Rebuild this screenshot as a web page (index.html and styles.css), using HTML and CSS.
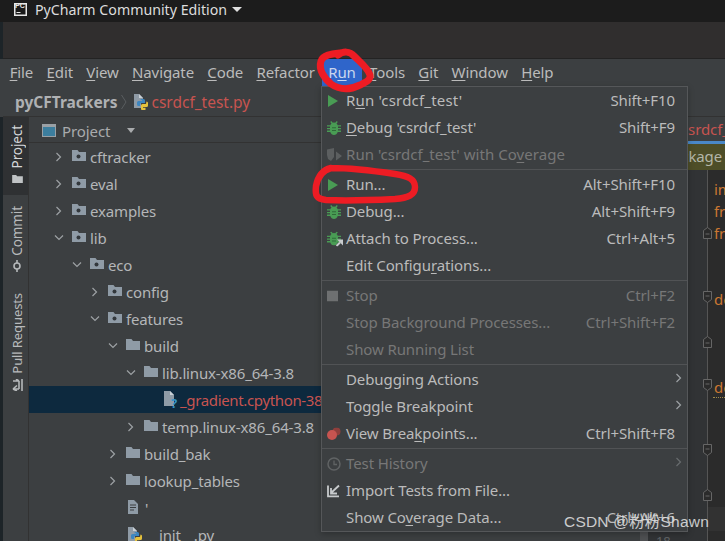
FILE: index.html
```html
<!DOCTYPE html>
<html lang="en">
<head>
<meta charset="utf-8">
<title>PyCharm Community Edition</title>
<link rel="stylesheet" href="styles.css">
</head>
<body>
<svg class="defs" width="0" height="0" aria-hidden="true">
  <symbol id="i-folder" viewBox="0 0 14 11"><path d="M0 0h5.500l1.500 2H14v9H0z" fill="#8f9ba6"/></symbol>
  <symbol id="i-module" viewBox="0 0 14 11"><path d="M0 0h5.500l1.500 2H14v9H0z" fill="#8f9ba6"/><circle cx="6.500" cy="6.500" r="2" fill="#33383c"/></symbol>
  <symbol id="i-right" viewBox="0 0 8 10"><path d="M1.500 1l4 4-4 4" fill="none" stroke="#9da1a4" stroke-width="1.200"/></symbol>
  <symbol id="i-down" viewBox="0 0 10 8"><path d="M1 1.500l4 4 4-4" fill="none" stroke="#9da1a4" stroke-width="1.200"/></symbol>
  <symbol id="i-python" viewBox="0 0 14 16"><path d="M0 0h5l4 4v3H7v7H0z" fill="#8f9ba6"/><path d="M9 4H5V0z" fill="#c9d0d6"/><path d="M7 5h2.500A1.500 1.500 0 0 1 11 6.500V9H7.500A1.500 1.500 0 0 0 6 10.500V12H4.500A1.500 1.500 0 0 1 3 10.500v-2A1.500 1.500 0 0 1 4.500 7H8V6.300H6z" fill="#3d86c0"/><path d="M12.500 7.500A1.500 1.500 0 0 1 14 9v2.500A1.500 1.500 0 0 1 12.500 13H9v.7h2.500V15.500A.5.500 0 0 1 11 16H8a1 1 0 0 1-1-1v-3.500A1.500 1.500 0 0 1 8.500 10H12z" fill="#e6c23c"/></symbol>
  <symbol id="i-play" viewBox="0 0 12 12"><path d="M1 0l10 6-10 6z" fill="#499c54"/></symbol>
  <symbol id="i-bug" viewBox="0 0 14 14"><path d="M4.200 0l1.600 1.800a4 4 0 0 1 2.400 0L9.800 0l1 .9L9.500 2.500c.6.500 1 1 1.200 1.700H14v1.300h-3V7h3v1.300h-3v1.300h3v1.300h-3.300c-.6 1.700-2 3-3.700 3s-3.100-1.300-3.700-3H0V9.600h3V8.300H0V7h3V5.500H0V4.200h3.300c.2-.7.600-1.200 1.200-1.700L3.200.9z" fill="#499c54"/><path d="M5 6.200h4v1H5zM5 8.900h4v1H5z" fill="#2f6b38"/></symbol>
</svg>

<div class="app">
  <header class="titlebar">
    <svg class="pc" viewBox="0 0 13 13" width="13" height="13"><rect width="13" height="13" fill="#e8e8e8"/><rect x="1.500" y="1.500" width="10" height="10" fill="#1a1a1a"/><rect x="2.500" y="9" width="4" height="1" fill="#e8e8e8"/></svg>
    <span class="pc-letters">PC</span>
    <span class="title">PyCharm Community Edition</span>
    <span class="caret"></span>
  </header>
  <div class="band"></div>

  <nav class="menubar">
    <span class="mi"><u>F</u>ile</span>
    <span class="mi"><u>E</u>dit</span>
    <span class="mi"><u>V</u>iew</span>
    <span class="mi"><u>N</u>avigate</span>
    <span class="mi"><u>C</u>ode</span>
    <span class="mi"><u>R</u>efactor</span>
    <span class="mi active">R<u>u</u>n</span>
    <span class="mi"><u>T</u>ools</span>
    <span class="mi"><u>G</u>it</span>
    <span class="mi"><u>W</u>indow</span>
    <span class="mi"><u>H</u>elp</span>
  </nav>

  <div class="crumbs">
    <b>pyCFTrackers</b>
    <svg class="crumb-sep" viewBox="0 0 6 16" width="6" height="16"><path d="M.5 1l4.500 7-4.500 7" fill="none" stroke="#5a5e60"/></svg>
    <svg class="ico-py" width="14" height="16"><use href="#i-python"/></svg>
    <span class="red">csrdcf_test.py</span>
  </div>

  <main class="workspace">
    <aside class="strip">
      <div class="tab on">
        <span class="vert">Project</span>
        <svg class="tab-ico" viewBox="0 0 12 9" width="11" height="8"><path d="M0 0h4.500l1 1.500H12V9H0z" fill="#c0c3c5"/></svg>
      </div>
      <div class="tab t-commit">
        <span class="vert">Commit</span>
        <svg class="tab-ico" viewBox="0 0 12 12" width="12" height="12"><circle cx="6" cy="6" r="3" fill="none" stroke="#b5b8ba" stroke-width="1.600"/><path d="M6 0v3M6 9v3" stroke="#b5b8ba" stroke-width="1.600"/></svg>
      </div>
      <div class="tab t-pull">
        <span class="vert">Pull Requests</span>
        <svg class="tab-ico" viewBox="0 0 12 12" width="12" height="12"><path d="M11 0v12M2 10h6M2 10L6 6.500M2 10l4 2M2 2h6M8 2L5 0M8 2v8" fill="none" stroke="#b5b8ba" stroke-width="1.600"/></svg>
      </div>
    </aside>

    <section class="project">
      <div class="project-head">
        <svg class="proj-ico" viewBox="0 0 14 13" width="14" height="13"><rect x=".5" y=".5" width="13" height="12" fill="#3c7e9e" stroke="#9aa0a5"/><rect x="1" y="1" width="12" height="2" fill="#9aa0a5"/></svg>
        <span>Project</span>
        <span class="proj-caret"></span>
      </div>
      <ul class="tree">
        <li class="row l0"><svg class="chev" width="8" height="10"><use href="#i-right"/></svg><svg class="fld" width="14" height="11"><use href="#i-module"/></svg>cftracker</li>
        <li class="row l0"><svg class="chev" width="8" height="10"><use href="#i-right"/></svg><svg class="fld" width="14" height="11"><use href="#i-module"/></svg>eval</li>
        <li class="row l0"><svg class="chev" width="8" height="10"><use href="#i-right"/></svg><svg class="fld" width="14" height="11"><use href="#i-module"/></svg>examples</li>
        <li class="row l0"><svg class="chev" width="10" height="8"><use href="#i-down"/></svg><svg class="fld" width="14" height="11"><use href="#i-module"/></svg>lib</li>
        <li class="row l1"><svg class="chev" width="10" height="8"><use href="#i-down"/></svg><svg class="fld" width="14" height="11"><use href="#i-module"/></svg>eco</li>
        <li class="row l2"><svg class="chev" width="8" height="10"><use href="#i-right"/></svg><svg class="fld" width="14" height="11"><use href="#i-module"/></svg>config</li>
        <li class="row l2"><svg class="chev" width="10" height="8"><use href="#i-down"/></svg><svg class="fld" width="14" height="11"><use href="#i-module"/></svg>features</li>
        <li class="row l3"><svg class="chev" width="10" height="8"><use href="#i-down"/></svg><svg class="fld" width="14" height="11"><use href="#i-folder"/></svg>build</li>
        <li class="row l4"><svg class="chev" width="10" height="8"><use href="#i-down"/></svg><svg class="fld" width="14" height="11"><use href="#i-folder"/></svg>lib.linux-x86_64-3.8</li>
        <li class="row l5 selected">
          <svg class="unk" viewBox="0 0 13 15" width="13" height="15"><path d="M0 0h6l4 4v11H0z" fill="#8f9ba6"/><path d="M6 0l4 4H6z" fill="#c9d0d6"/></svg>
          <span class="q">?</span><span class="red grad">_gradient.cpython-38</span>
        </li>
        <li class="row l4"><svg class="chev" width="8" height="10"><use href="#i-right"/></svg><svg class="fld" width="14" height="11"><use href="#i-folder"/></svg>temp.linux-x86_64-3.8</li>
        <li class="row l3"><svg class="chev" width="8" height="10"><use href="#i-right"/></svg><svg class="fld" width="14" height="11"><use href="#i-folder"/></svg>build_bak</li>
        <li class="row l3"><svg class="chev" width="8" height="10"><use href="#i-right"/></svg><svg class="fld" width="14" height="11"><use href="#i-folder"/></svg>lookup_tables</li>
        <li class="row l3f">
          <svg class="doc" viewBox="0 0 10 14" width="10" height="14"><path d="M0 0h6l4 4v10H0z" fill="#8f9ba6"/><path d="M2 5h6M2 7.500h6M2 10h4" stroke="#3c3f41"/></svg>'
        </li>
        <li class="row l3f">
          <svg class="ico-py" width="14" height="16"><use href="#i-python"/></svg><span class="init">__init__.py</span>
        </li>
      </ul>
      <div class="thumb"></div>
    </section>

    <section class="editor">
      <div class="ed-tabs"><span class="red">csrdcf_test.py</span></div>
      <div class="ed-banner">Package requirements</div>
      <div class="ed-body">
        <div class="gutter"><span class="lnum">18</span></div>
        <div class="code">
          <span class="kw k1">import</span>
          <span class="kw k2">from</span>
          <span class="kw k3">from</span>
          <span class="kw k4">def</span>
          <span class="kw k5">def</span>
          <span class="squig"></span>
          <span class="caretline"></span>
          <svg class="fold f1" viewBox="0 0 9 12" width="9" height="12"><path d="M.5 3.500L4.500.5l4 3v8h-8zM2.500 7h4" fill="#2b2b2b" stroke="#666"/></svg>
          <svg class="fold f2" viewBox="0 0 9 12" width="9" height="12"><path d="M.5.500h8v8l-4 3-4-3zM2.500 5h4" fill="#2b2b2b" stroke="#666"/></svg>
          <svg class="fold f3" viewBox="0 0 9 12" width="9" height="12"><path d="M.5 3.500L4.500.5l4 3v8h-8zM2.500 7h4" fill="#2b2b2b" stroke="#666"/></svg>
          <svg class="fold f4" viewBox="0 0 9 12" width="9" height="12"><path d="M.5.500h8v8l-4 3-4-3zM2.500 5h4" fill="#2b2b2b" stroke="#666"/></svg>
          <svg class="fold f5" viewBox="0 0 9 12" width="9" height="12"><path d="M.5.500h8v8l-4 3-4-3zM2.500 5h4" fill="#2b2b2b" stroke="#666"/></svg>
          <svg class="fold f6" viewBox="0 0 9 12" width="9" height="12"><path d="M.5 3.500L4.500.5l4 3v8h-8zM2.500 7h4" fill="#2b2b2b" stroke="#666"/></svg>
        </div>
      </div>
    </section>
  </main>

  <div class="menu">
    <div class="item"><svg class="mico" width="12" height="12"><use href="#i-play"/></svg><span class="lbl w1">R<u>u</u>n 'csrdcf_test'</span><span class="key">Shift+F10</span></div>
    <div class="item"><svg class="mico" width="14" height="14"><use href="#i-bug"/></svg><span class="lbl"><u>D</u>ebug 'csrdcf_test'</span><span class="key">Shift+F9</span></div>
    <div class="item off"><svg class="mico" viewBox="0 0 15 14" width="15" height="14"><path d="M0 1.500l7-1.500v9l-3 4-3-2-1-4z" fill="#5c5f60"/><path d="M9 3.500l6 4.500-6 4.500z" fill="#5c5f60"/></svg><span class="lbl w2">Run 'csrdcf_test' with Co<u>v</u>erage</span></div>
    <div class="sep"></div>
    <div class="item"><svg class="mico" width="12" height="12"><use href="#i-play"/></svg><span class="lbl">Run...</span><span class="key">Alt+Shift+F10</span></div>
    <div class="item"><svg class="mico" width="14" height="14"><use href="#i-bug"/></svg><span class="lbl">Debug...</span><span class="key">Alt+Shift+F9</span></div>
    <div class="item"><svg class="mico" viewBox="0 0 16 15" width="16" height="15"><use href="#i-bug" width="14" height="14"/><path d="M9.500 14.500L13 11" stroke="#c8cbcd" stroke-width="2"/><path d="M10 8h6v6z" fill="#c8cbcd"/></svg><span class="lbl">Attach to Process...</span><span class="key">Ctrl+Alt+5</span></div>
    <div class="item"><span class="lbl">Edit Configu<u>r</u>ations...</span></div>
    <div class="sep"></div>
    <div class="item off"><svg class="mico" viewBox="0 0 11 11" width="11" height="11"><rect width="11" height="11" fill="#6e7071"/></svg><span class="lbl">Stop</span><span class="key">Ctrl+F2</span></div>
    <div class="item off"><span class="lbl">Stop Background Processes...</span><span class="key">Ctrl+Shift+F2</span></div>
    <div class="item off"><span class="lbl">Show Running List</span></div>
    <div class="sep"></div>
    <div class="item"><span class="lbl">Debugging Actions</span><svg class="sub" width="8" height="10"><use href="#i-right"/></svg></div>
    <div class="item"><span class="lbl">Toggle Breakpoint</span><svg class="sub" width="8" height="10"><use href="#i-right"/></svg></div>
    <div class="item"><svg class="mico" viewBox="0 0 14 13" width="14" height="13"><circle cx="9.500" cy="4" r="4" fill="#8f3f3c"/><circle cx="5" cy="7.500" r="5" fill="#c75450"/></svg><span class="lbl">View Brea<u>k</u>points...</span><span class="key">Ctrl+Shift+F8</span></div>
    <div class="sep"></div>
    <div class="item off"><svg class="mico" viewBox="0 0 14 14" width="14" height="14"><circle cx="7" cy="7" r="6" fill="none" stroke="#606364" stroke-width="1.500"/><path d="M7 3.500V7.500H10" fill="none" stroke="#606364" stroke-width="1.300"/></svg><span class="lbl">Test History</span><svg class="sub dim" width="8" height="10"><use href="#i-right"/></svg></div>
    <div class="item"><svg class="mico" viewBox="0 0 13 13" width="13" height="13"><path d="M1 1v11h11M12 1L4 8.500M4 3.500V9h6" fill="none" stroke="#c8cbcd" stroke-width="1.800"/></svg><span class="lbl">Import Tests from File...</span></div>
    <div class="item"><span class="lbl">Show Co<u>v</u>erage Data...</span><span class="key">Ctrl+Alt+6</span></div>
  </div>

  <svg class="scribble" viewBox="0 0 725 541" width="725" height="541" aria-hidden="true">
    <path d="M340 53C331 54 323 55 321 61C318 70 325 79 331 84C341 91 352 89 360 85C366 82 371 80 370 75C368 68 360 62 354 56C350 51 343 51 338 55" fill="none" stroke="#ed1c24" stroke-width="7" stroke-linecap="round" stroke-linejoin="round"/>
    <path d="M331 168C323 170 318 176 316 186C315 195 316 199 326 200C345 201 375 200 395 199C408 198 415 195 415 187C415 179 408 176 395 174C375 171 350 168 331 168" fill="none" stroke="#ed1c24" stroke-width="6.500" stroke-linecap="round" stroke-linejoin="round"/>
  </svg>

  <div class="watermark">CSDN @粉粉Shawn</div>
</div>
</body>
</html>
```
FILE: styles.css
```css
* { box-sizing: border-box; }
html, body { margin: 0; padding: 0; }
body { width: 725px; height: 541px; overflow: hidden; background: #3c3f41; font-family: "Noto Sans", "Noto Sans CJK SC", sans-serif; font-size: 15px; letter-spacing: -0.1px; color: #bbbbbb; }
u { text-underline-offset: 2px; text-decoration-thickness: 1px; }
.defs { position: absolute; }
.app { position: relative; width: 725px; height: 541px; display: flex; flex-direction: column; overflow: hidden; }
.red { color: #c75450; }

.titlebar { height: 22px; background: #1c1c1c; display: flex; align-items: center; padding-left: 14px; position: relative; flex: none; letter-spacing: 0; }
.pc { flex: none; margin-top: -3px; }
.pc-letters { position: absolute; left: 15px; top: 1px; font: bold 7px/9px "Liberation Sans", sans-serif; color: #e8e8e8; }
.title { margin-left: 8px; color: #dcdcdc; font-size: 14.200px; line-height: 18px; position: relative; top: -1px; }
.caret { margin-left: 5px; width: 0; height: 0; border-left: 5px solid transparent; border-right: 5px solid transparent; border-top: 5px solid #e0e0e0; margin-top: -3px; }
.band { height: 37px; flex: none; background: #302e2e; border-bottom: 1px solid #232323; margin-left: 3px; box-shadow: -3px 0 0 #1d2428; }

.menubar { height: 28px; flex: none; background: #3c3f41; display: flex; align-items: center; margin-left: 3px; }
.mi { height: 28px; line-height: 26px; padding: 0 6.650px; white-space: nowrap; color: #bbbbbb; }
.active { background: #2f65ca; color: #c9d6ee; }

.crumbs { height: 30px; flex: none; background: #3c3f41; display: flex; align-items: center; padding-left: 12px; margin-left: 3px; border-bottom: 1px solid #323232; font-size: 15.500px; letter-spacing: 0; }
.crumbs b { color: #afb1b3; }
.crumb-sep { margin: 0 7px 0 4px; flex: none; }
.crumbs .ico-py { margin-right: 3px; flex: none; }

.workspace { flex: 1; min-height: 0; display: flex; border-left: 3px solid #1d2428; }
.strip { width: 26px; flex: none; background: #3c3f41; border-right: 1px solid #323232; display: flex; flex-direction: column; }
.tab { display: flex; flex-direction: column; align-items: center; width: 100%; color: #b8babc; font-size: 13.500px; padding-left: 3px; }
.tab.on { height: 78px; background: #2f3133; color: #d5d7d9; padding-top: 8px; gap: 7px; }
.vert { writing-mode: vertical-rl; transform: rotate(180deg); line-height: 22px; white-space: nowrap; }
.t-commit { padding-top: 11px; gap: 4px; height: 86px; }
.t-pull { padding-top: 12px; gap: 5px; font-size: 13px; }

.project { flex: 1; min-width: 0; position: relative; background: #3c3f41; overflow: hidden; }
.project-head { height: 26px; padding-top: 2px; display: flex; align-items: center; padding-left: 13px; border-bottom: 1px solid #323232; color: #a9abad; }
.proj-ico { margin-right: 6px; flex: none; }
.proj-caret { margin-left: 17px; width: 0; height: 0; border-left: 4.500px solid transparent; border-right: 4.500px solid transparent; border-top: 5px solid #a9abad; }
.tree { list-style: none; margin: 0; padding: 0; letter-spacing: -0.15px; }
.row { height: 27px; display: flex; align-items: center; white-space: nowrap; color: #b4b6b8; }
.chev { flex: none; width: 10px; margin-right: 4px; }
.fld { flex: none; margin-right: 4px; margin-top: -2px; }
.l0 { padding-left: 25px; }
.l1 { padding-left: 43px; }
.l2 { padding-left: 61px; }
.l3 { padding-left: 79px; }
.l4 { padding-left: 97px; }
.l5 { padding-left: 135px; }
.l3f { padding-left: 99px; }
.l0 .fld, .l1 .fld, .l2 .fld, .l3 .fld, .l4 .fld { margin-left: 4px; }
.selected { background: #0d293e; }
.unk { flex: none; margin-top: -2px; }
.q { color: #3592c4; font-weight: 700; font-size: 13px; width: 8px; margin-left: -6px; margin-right: 1px; position: relative; top: 3px; }
.grad { letter-spacing: -0.35px; }
.doc { flex: none; margin-right: 7px; margin-top: -2px; }
.l3f .ico-py { flex: none; margin-right: 4px; }
.thumb { position: absolute; right: 0; top: 390px; width: 8px; height: 40px; background: #4e5052; }

.editor { width: 77px; flex: none; display: flex; flex-direction: column; background: #2b2b2b; position: relative; overflow: hidden; }
.ed-tabs { height: 27px; background: #3c3f41; border-bottom: 3px solid #4a88c7; padding-left: 33px; line-height: 24px; white-space: nowrap; overflow: hidden; flex: none; }
.ed-banner { height: 26px; background: #4e4e28; color: #b4b6a8; line-height: 25px; white-space: nowrap; padding-left: 16px; overflow: hidden; flex: none; }
.ed-body { flex: 1; display: flex; min-height: 0; position: relative; }
.gutter { width: 60px; flex: none; background: #313335; border-right: 1px solid #555; position: relative; }
.lnum { position: absolute; left: 8px; top: 362px; color: #606366; font-size: 13px; }
.code { flex: 1; position: relative; font-size: 15px; }
.kw { position: absolute; left: 6px; color: #cc7832; line-height: 20px; white-space: nowrap; }
.k1 { top: 9px; }
.k2 { top: 31px; }
.k3 { top: 53px; }
.k4 { top: 119px; }
.k5 { top: 207px; }
.squig { position: absolute; left: 5px; top: 227px; width: 14px; height: 2px; border-top: 1px dotted #a08a4a; }
.caretline { position: absolute; left: 0; right: 0; top: 337px; height: 24px; background: #323232; }
.fold { position: absolute; left: -5px; }
.f1 { top: 57px; }
.f2 { top: 121px; }
.f3 { top: 166px; }
.f4 { top: 209px; }
.f5 { top: 274px; }
.f6 { top: 319px; }

.menu { position: absolute; left: 321px; top: 86px; width: 367px; background: #3c3f41; border: 1px solid #555759; box-shadow: 0 2px 6px rgba(0,0,0,.25); }
.item { height: 27px; display: flex; align-items: center; position: relative; padding: 0 12px 2px 24px; white-space: nowrap; color: #bbbbbb; }
.item.off { color: #777777; }
.lbl { flex: 1; }
.w1 { letter-spacing: 0.2px; }
.w2 { letter-spacing: 0.05px; }
.key { flex: none; }
.item.off .key { color: #777777; }
.mico { position: absolute; left: 5px; top: 50%; transform: translateY(-50%); }
.sub { position: absolute; right: 4px; top: 7px; }
.sub.dim { opacity: .45; }
.sep { height: 1px; margin: 1px 0; background: #515355; }

.scribble { position: absolute; left: 0; top: 0; pointer-events: none; }
.watermark { position: absolute; left: 564px; top: 512px; font-family: "Liberation Sans", "Noto Sans CJK SC", sans-serif; font-size: 15.500px; line-height: 20px; color: rgba(225,225,225,.88); letter-spacing: .2px; white-space: nowrap; }
```
